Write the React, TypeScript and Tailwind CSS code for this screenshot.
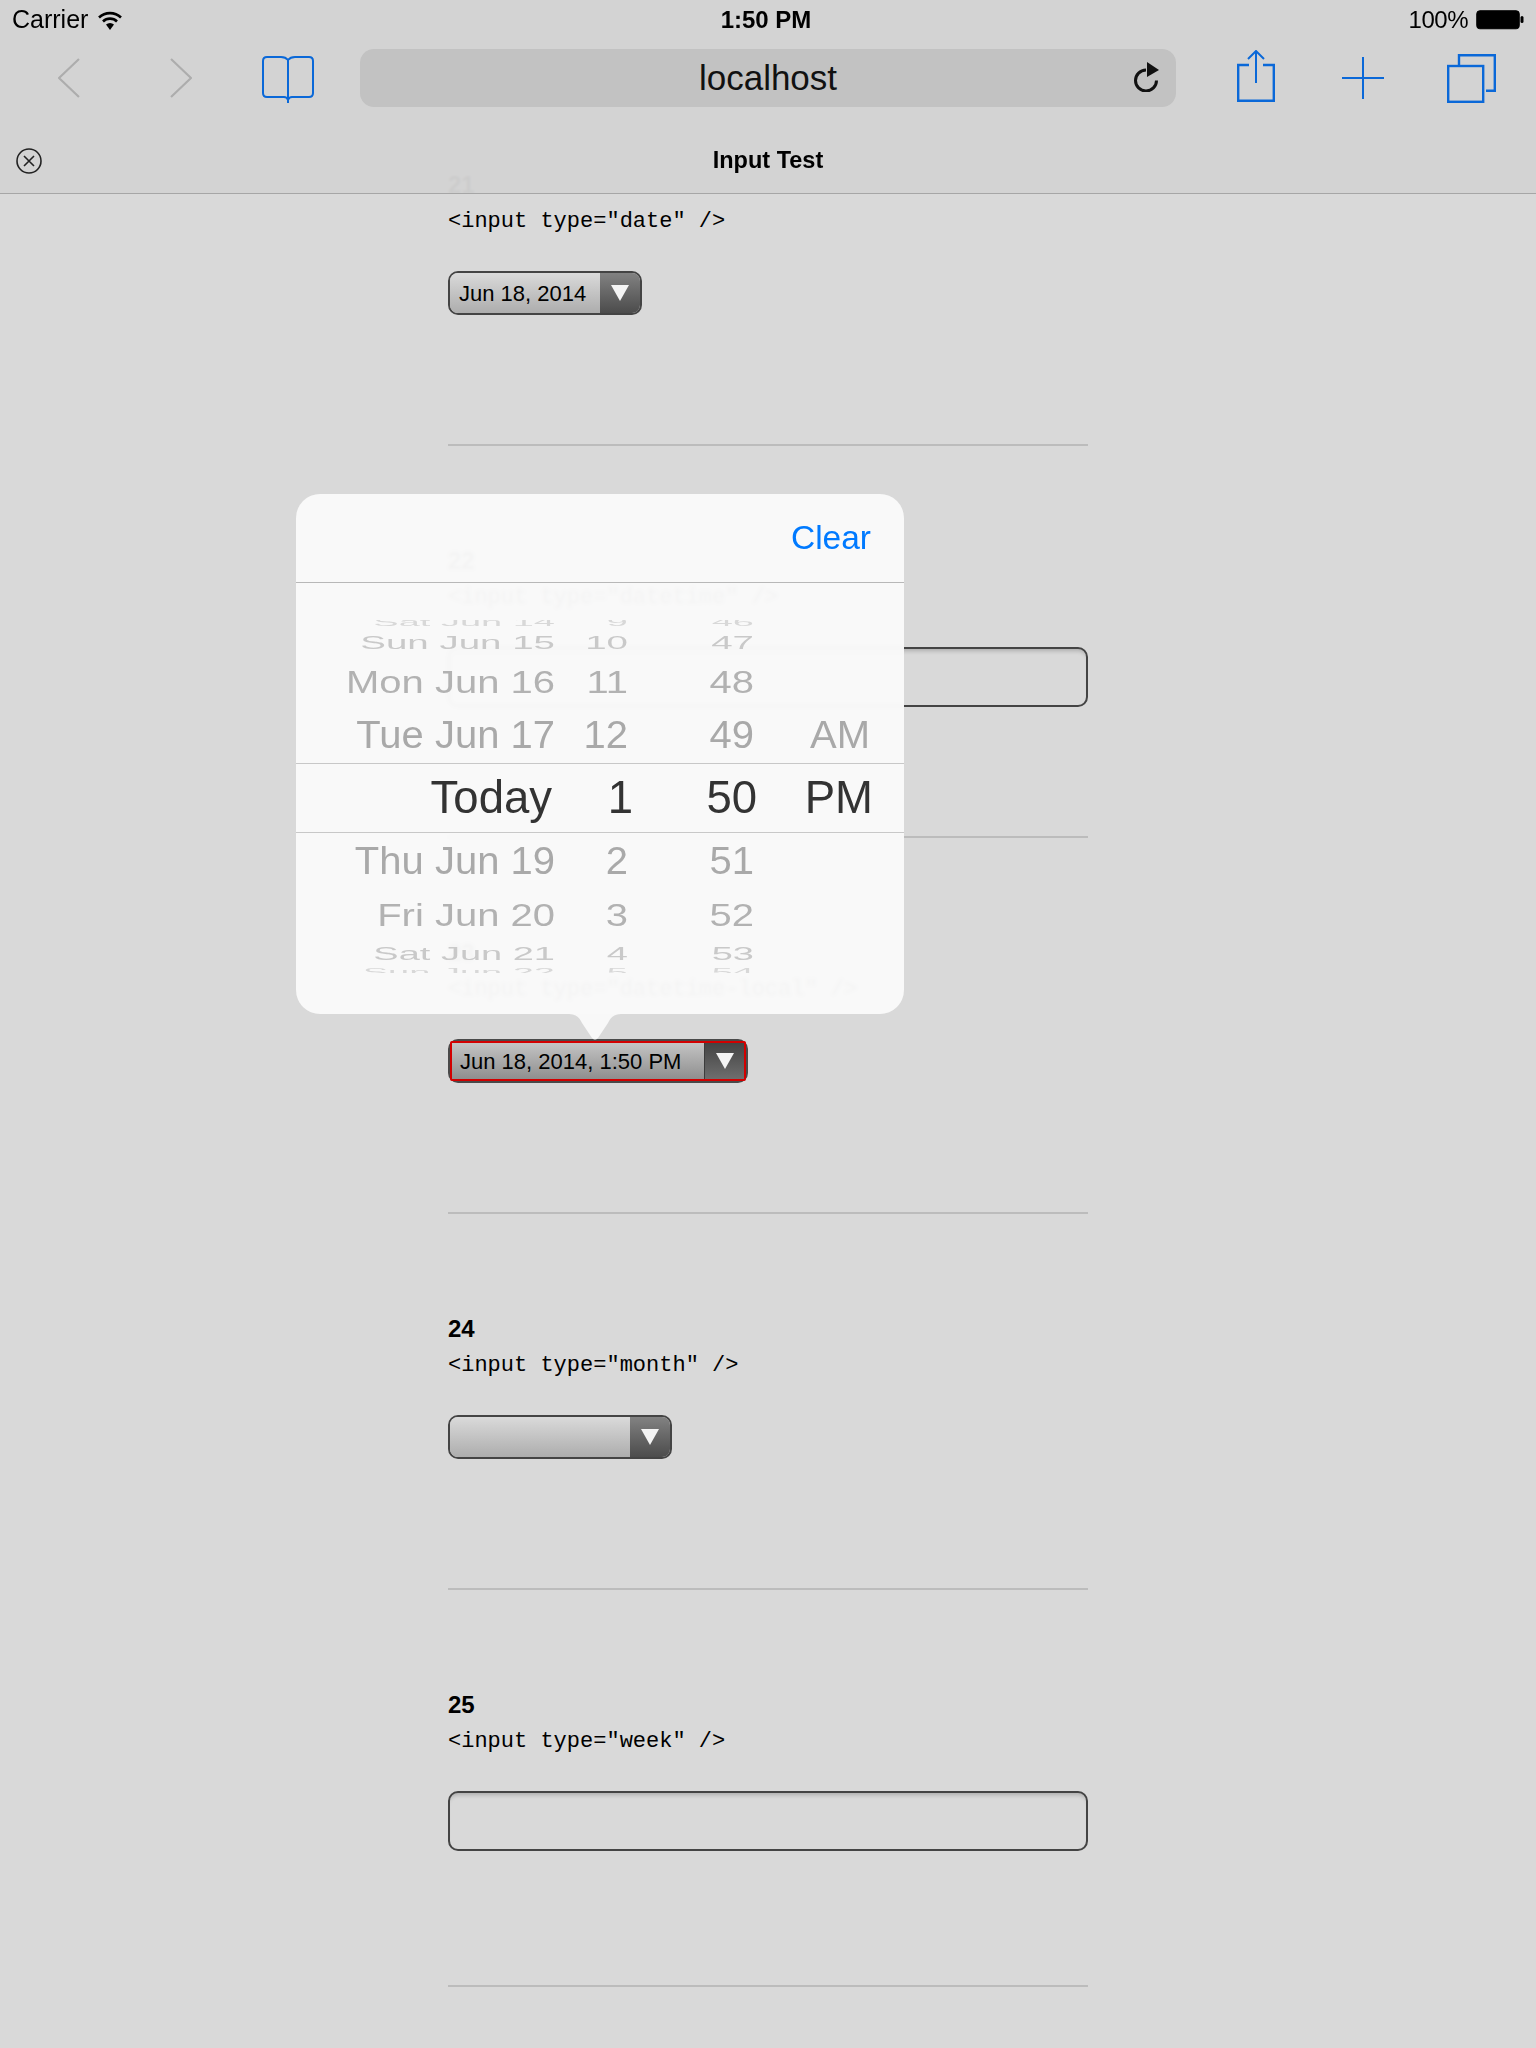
import React from "react";

const BLUE = "#0a68d8";

function Wifi() {
  return (
    <svg width="24" height="19" viewBox="0 0 24 19" fill="none" stroke="#000" strokeWidth="2.6">
      <path d="M1 6.5 A16 16 0 0 1 23 6.5" />
      <path d="M5 10.5 A10 10 0 0 1 19 10.5" />
      <path d="M8 13.6 L12 19 L16 13.6 A6 6 0 0 0 8 13.6 Z" fill="#000" stroke="none" />
    </svg>
  );
}

function Battery() {
  return (
    <svg width="50" height="20" viewBox="0 0 50 20">
      <rect x="0.75" y="0.75" width="42.5" height="18" rx="3" fill="#000" stroke="#000" strokeWidth="1" />
      <rect x="44.5" y="6" width="3" height="7" rx="1.5" fill="#000" />
    </svg>
  );
}

function Chevron({ flip }: { flip?: boolean }) {
  return (
    <svg width="22" height="40" viewBox="0 0 22 40" fill="none" stroke="#adadad" strokeWidth="2.2">
      <path d={flip ? "M1 1 L21 20 L1 39" : "M21 1 L1 20 L21 39"} />
    </svg>
  );
}

function Book() {
  return (
    <svg width="52" height="47" viewBox="0 0 52 47" fill="none" stroke={BLUE} strokeWidth="2">
      <path d="M26 4 C24 1.5 22 1 19 1 H5 Q1 1 1 5 V37 Q1 41 5 41 H22 Q25 41 26 44 Q27 41 30 41 H47 Q51 41 51 37 V5 Q51 1 47 1 H33 C30 1 28 1.5 26 4 Z" />
      <path d="M26 4 V47" />
    </svg>
  );
}

function Reload() {
  return (
    <svg width="27" height="30" viewBox="0 0 27 30" fill="none">
      <path d="M13 8 A10.5 10.5 0 1 0 23.5 18.5" stroke="#111" strokeWidth="3" />
      <path d="M14 0 L26 8 L14 15 Z" fill="#111" />
    </svg>
  );
}

function Share() {
  return (
    <svg width="38" height="52" viewBox="0 0 38 52" fill="none" stroke={BLUE} strokeWidth="2">
      <path d="M12 15 H1.2 V50.8 H36.8 V15 H26" strokeWidth="2.4" />
      <path d="M19 1 V33" />
      <path d="M11 9 L19 1 L27 9" />
    </svg>
  );
}

function Plus() {
  return (
    <svg width="42" height="42" viewBox="0 0 42 42" fill="none" stroke={BLUE} strokeWidth="2">
      <path d="M21 0 V42 M0 21 H42" />
    </svg>
  );
}

function Tabs() {
  return (
    <svg width="49" height="49" viewBox="0 0 49 49" fill="none" stroke={BLUE} strokeWidth="2.4">
      <rect x="1.2" y="12" width="35" height="35.8" />
      <path d="M12 11 V1.2 H47.8 V36.8 H39" />
    </svg>
  );
}

function CloseCircle() {
  return (
    <svg width="26" height="26" viewBox="0 0 26 26" fill="none" stroke="#222" strokeWidth="1.6">
      <circle cx="13" cy="13" r="12" />
      <path d="M8 8 L18 18 M18 8 L8 18" />
    </svg>
  );
}

function Triangle() {
  return (
    <svg width="18" height="16" viewBox="0 0 18 16">
      <path d="M0 0 H18 L9 16 Z" fill="#f4f4f4" />
    </svg>
  );
}

function Header() {
  return (
    <header className="absolute top-0 left-0 z-10 flex h-[194px] w-full flex-col border-b border-[#a6a6a6] bg-[#d3d3d3]/[.97] text-black backdrop-blur-[1px]">
      <div className="grid h-[40px] grid-cols-3 items-center pr-[10px] pl-[12px] text-[24px]">
        <div className="flex items-center gap-[10px]">
          <span className="text-[25px]">Carrier</span>
          <Wifi />
        </div>
        <div className="pr-[6px] text-center font-bold">1:50 PM</div>
        <div className="flex items-center justify-end gap-[8px]">
          <span className="tracking-[-0.5px]">100%</span>
          <Battery />
        </div>
      </div>
      <div className="flex h-[76px] items-center pl-[58px]">
        <Chevron />
        <div className="ml-[90px]">
          <Chevron flip />
        </div>
        <div className="mt-[3px] ml-[70px]">
          <Book />
        </div>
        <div className="relative ml-[46px] flex h-[58px] w-[816px] items-center justify-center rounded-[14px] bg-[#c2c2c2] text-[35px] text-[#111]">
          localhost
          <div className="absolute top-[13px] right-[16px]">
            <Reload />
          </div>
        </div>
        <div className="-mt-[4px] ml-[61px]">
          <Share />
        </div>
        <div className="ml-[67px]">
          <Plus />
        </div>
        <div className="ml-[63px]">
          <Tabs />
        </div>
      </div>
      <div className="relative mt-[13px] flex flex-1 items-center justify-center text-[23.5px] font-bold">
        <div className="absolute left-[16px]">
          <CloseCircle />
        </div>
        Input Test
      </div>
    </header>
  );
}

function Select({ text, width, focused }: { text: string; width: string; focused?: boolean }) {
  if (focused) {
    return (
      <div className={`h-[44px] ${width} rounded-[10px] border-2 border-[#4a4a4a] bg-[#555]`}>
        <div className="flex h-full w-full overflow-hidden rounded-[2px] border-2 border-[#d20000]">
          <div className="flex flex-1 items-center bg-linear-to-b from-[#c4c4c4] to-[#8f8f8f] pl-[8px] text-[22px] text-black">
            {text}
          </div>
          <div className="flex w-[40px] items-center justify-center border-l border-[#3c3c3c] bg-linear-to-b from-[#444] to-[#6e6e6e]">
            <Triangle />
          </div>
        </div>
      </div>
    );
  }
  return (
    <div className={`flex h-[44px] ${width} overflow-hidden rounded-[10px] border-[2.5px] border-[#444]`}>
      <div className="flex flex-1 items-center bg-linear-to-b from-[#dadada] to-[#adadad] pl-[9px] text-[22px] text-black">
        {text}
      </div>
      <div className="flex w-[40px] items-center justify-center bg-linear-to-b from-[#828282] to-[#4c4c4c]">
        <Triangle />
      </div>
    </div>
  );
}

function TextField() {
  return (
    <div className="h-[60px] w-[640px] rounded-[10px] border-[2.5px] border-[#444] shadow-[inset_0_5px_4px_-3px_rgba(0,0,0,0.2)]" />
  );
}

function Section({
  n,
  code,
  pad,
  children,
}: {
  n: number;
  code: string;
  pad: string;
  children: React.ReactNode;
}) {
  return (
    <section className="w-[640px]">
      <h2 className="h-[38px] text-[24px] leading-[38px] font-bold text-black">{n}</h2>
      <div className="h-[36px] font-['Liberation_Mono',monospace] text-[22px] leading-[36px] whitespace-pre text-black">
        {code}
      </div>
      <div className={`mt-[31px] ${pad}`}>{children}</div>
      <div className="mb-[96px] h-[2px] bg-[#bcbcbc]" />
    </section>
  );
}

function WheelRow({
  date,
  hour,
  min,
  ampm,
  row,
  text,
}: {
  date: string;
  hour: string;
  min: string;
  ampm?: string;
  row: string;
  text: string;
}) {
  return (
    <div className={`grid grid-cols-[259px_73px_126px_116px] grid-rows-[100%] items-center text-right leading-none whitespace-nowrap ${row} ${text}`}>
      <span>{date}</span>
      <span>{hour}</span>
      <span>{min}</span>
      <span>{ampm}</span>
    </div>
  );
}

function Popover() {
  return (
    <div className="absolute top-[494px] left-[296px] z-20 w-[608px]">
      <div className="h-[520px] overflow-hidden rounded-[24px] bg-[#f9f9f9]/[.98] backdrop-blur-[1.5px]">
        <div className="flex h-[89px] items-center justify-end border-b border-[#b8b8b8] pr-[33px] text-[33.5px] text-[#007aff]">
          Clear
        </div>
        <div className="mt-[37px] h-[353px] overflow-hidden">
          <div className="-mt-[6px]">
            <WheelRow row="h-[15px]" text="text-[38px] text-[#d8d8d8] [&>span]:scale-y-[0.3]" date="Sat Jun 14" hour="9" min="46" />
            <WheelRow row="h-[27px]" text="text-[38.5px] text-[#c9c9c9] [&>span]:scale-y-[0.5]" date="Sun Jun 15" hour="10" min="47" />
            <WheelRow row="h-[51px]" text="text-[40px] text-[#b2b2b2] [&>span]:scale-y-[0.8]" date="Mon Jun 16" hour="11" min="48" />
            <WheelRow row="h-[56px]" text="text-[40px] text-[#a9a9a9] [&>span]:scale-y-[0.95]" date="Tue Jun 17" hour="12" min="49" ampm="AM" />
            <div className="grid h-[70px] grid-cols-[256px_81px_124px_116px] items-center border-y border-[#c8c8c8] text-right text-[45.5px] leading-none text-[#333]">
              <span>Today</span>
              <span>1</span>
              <span>50</span>
              <span>PM</span>
            </div>
            <WheelRow row="h-[56px]" text="text-[40px] text-[#a9a9a9] [&>span]:scale-y-[0.95]" date="Thu Jun 19" hour="2" min="51" />
            <WheelRow row="h-[52px]" text="text-[40px] text-[#b2b2b2] [&>span]:scale-y-[0.8]" date="Fri Jun 20" hour="3" min="52" />
            <WheelRow row="h-[24px]" text="text-[38px] text-[#c9c9c9] [&>span]:scale-y-[0.5]" date="Sat Jun 21" hour="4" min="53" />
            <WheelRow row="h-[14px]" text="text-[38px] text-[#d8d8d8] [&>span]:scale-y-[0.3]" date="Sun Jun 22" hour="5" min="54" />
          </div>
        </div>
      </div>
      <svg className="absolute top-[520px] left-[271px]" width="56" height="26" viewBox="0 0 56 26">
        <path d="M0 0 C9 0 12 3 15 9 L25 24 Q28 27 31 24 L41 9 C44 3 47 0 56 0 Z" fill="#f8f8f8" />
      </svg>
    </div>
  );
}

export default function App() {
  return (
    <div className="relative h-[2048px] w-[1536px] overflow-hidden bg-[#d9d9d9] font-['Liberation_Sans',sans-serif]">
      <Header />
      <Popover />
      <main className="flex flex-col pt-[166px] pl-[448px]">
        <Section n={21} code={'<input type="date" />'} pad="pb-[129px]">
          <Select text="Jun 18, 2014" width="w-[194px]" />
        </Section>
        <Section n={22} code={'<input type="datetime" />'} pad="pb-[129px]">
          <TextField />
        </Section>
        <Section n={23} code={'<input type="datetime-local" />'} pad="pb-[129px]">
          <Select text="Jun 18, 2014, 1:50 PM" width="w-[300px]" focused />
        </Section>
        <Section n={24} code={'<input type="month" />'} pad="pb-[129px]">
          <Select text="" width="w-[224px]" />
        </Section>
        <Section n={25} code={'<input type="week" />'} pad="pb-[134px]">
          <TextField />
        </Section>
      </main>
    </div>
  );
}
